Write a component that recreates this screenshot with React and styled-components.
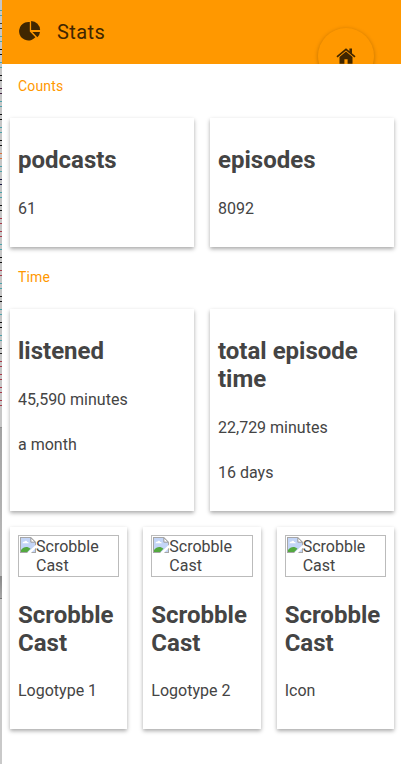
import React from "react";
import styled, { createGlobalStyle } from "styled-components";

const Global = createGlobalStyle`
  html, body { margin: 0; padding: 0; background: #fff; overflow: hidden; }
  body { font-family: Roboto, sans-serif; font-size: 16px; color: #444; }
  * { box-sizing: border-box; }
`;
const Page = styled.div`display: flex; width: 402px; height: 764px;`;
const Edge = styled.div`
  flex: 0 0 2px; height: 764px; padding-top: 10px; overflow: hidden;
  background: linear-gradient(#c6c6c6 0 427px, #8f8f8f 427px 428px, #a2a2a2 428px, #bdbdbd 576px, #888 576px, #a5a5a5 598px, #777 598px 599px, #c9c9c9 599px);
`;
const Mark = styled.div`
  height: 6px; margin: 0 0 7px;
  border: solid ${(p) => p.$color}; border-width: 1px 0;
`;
const Screen = styled.div`flex: 0 0 400px; background: #fff;`;
const Header = styled.header`
  height: 64px; padding: 0 28px 0 16px; display: flex; align-items: center;
  background: #ff9800; color: #402600; overflow: hidden;
`;
const Title = styled.h1`
  margin: 0 auto 0 15px; font-size: 20px; line-height: 28px; font-weight: 400; letter-spacing: 0.4px;
`;
const Fab = styled.button`
  align-self: flex-start; flex: none; width: 56px; height: 56px; margin-top: 28px; padding: 0 0 1px;
  display: flex; align-items: center; justify-content: center;
  border: 0; border-radius: 50%; background: #ff9800; color: #402600;
  box-shadow: 0 1px 4px rgba(0,0,0,.26);
`;
const Subheader = styled.h3`
  margin: 0; height: 46px; padding: 14px 16px 0; font-size: 14px; line-height: 16px; font-weight: 400;
  letter-spacing: 0.15px; color: #ff9800;
`;
const Grid = styled.div`
  display: grid; grid-template-columns: repeat(${(p) => p.$cols}, 1fr); gap: 16px;
  padding: 8px;
`;
const Card = styled.article`
  padding: 8px; min-width: 0; height: ${(p) => p.$height}px; background: #fff;
  box-shadow: 0 1.5px 4px rgba(0,0,0,.34);
`;
const CardTitle = styled.h2`
  margin: 20px 0 ${(p) => (p.$tight ? 24 : 25)}px; font-size: 24px; line-height: 28px; font-weight: 700;
`;
const Line = styled.p`margin: 0 0 26px; line-height: 19px;`;
const Missing = styled.div`
  display: flex; align-items: flex-start; height: 42px; margin-bottom: 24px; padding: 1px 0 1px 1px;
  border: 1px solid #bbb; line-height: 19px;
`;
const BrokenIcon = styled.svg`flex: none; width: 16px; height: 16px;`;

const PieIcon = () => (
  <svg width="24" height="24" viewBox="0 0 24 24" fill="currentColor">
    <path d="M11.8 2v9.4l5.6 5.9A9.3 9.3 0 1 1 11.8 2Z" />
    <path d="M13.1 1a9.1 9.1 0 0 1 9 9.1h-9Z" />
    <path d="M14.4 12h7.6a9 9 0 0 1-2.6 5.3Z" />
  </svg>
);
const HomeIcon = () => (
  <svg width="20" height="18" viewBox="0 0 20 18" fill="none">
    <path d="M1 9.9 10 2.3l9 7.6" stroke="currentColor" strokeWidth="1.7" />
    <path d="M13.4 1.5h2.6v5.6l-2.6-2.2Z" fill="currentColor" />
    <path d="m10 4.6 6.5 5.5v6.6h-4.9v-4.5H8.4v4.5H3.5v-6.6Z" fill="currentColor" />
  </svg>
);
const BrokenImage = () => (
  <BrokenIcon viewBox="0 0 16 16">
    <path d="M0 0h11l5 5v11H0z" fill="#a6a6a6" />
    <path d="M1 1h9.5v4.5H15V15H1z" fill="#c3d5f7" />
    <path d="M2.5 6.3c0-1.5 1.2-1.9 1.8-1.5.5-1.6 2.6-1.5 2.9.1 1-.1 1.6.5 1.6 1.4z" fill="#fff" />
    <path d="M1 15v-2c2.5-3.5 6.5-4 9.5-1.3L7.3 15z" fill="#53a93f" />
    <path d="M11 1l4 4h-4z" fill="#fff" stroke="#999" strokeWidth=".7" />
    <path d="M7 16l9-8.2v3L11 16z" fill="#fff" />
  </BrokenIcon>
);

const teal = "#4ba3ab";
const red = "#a83848";
const dark = "#111";
const marks = [
  teal, "#4a4030", teal, dark, teal, dark, "#402040", teal, dark, teal, dark, "#d9703c", teal,
  "#151540", teal, dark, red, red, teal, dark, red, teal, dark, teal, dark, teal, "#222", red, red, red, red,
];
const counts = [["podcasts", "61"], ["episodes", "8092"]];
const times = [["listened", "45,590 minutes", "a month"], ["total episode time", "22,729 minutes", "16 days"]];
const logos = ["Logotype 1", "Logotype 2", "Icon"];

const Stats = ({ items, height }) => (
  <Grid $cols={2}>
    {items.map(([title, ...lines]) => (
      <Card key={title} $height={height}>
        <CardTitle>{title}</CardTitle>
        {lines.map((l) => <Line key={l}>{l}</Line>)}
      </Card>
    ))}
  </Grid>
);

export default function App() {
  return (
    <Page>
      <Global />
      <Edge>{marks.map((c, i) => <Mark key={i} $color={c} />)}</Edge>
      <Screen>
        <Header>
          <PieIcon />
          <Title>Stats</Title>
          <Fab aria-label="Home"><HomeIcon /></Fab>
        </Header>
        <Subheader>Counts</Subheader>
        <Stats items={counts} height={129} />
        <Subheader>Time</Subheader>
        <Stats items={times} height={202} />
        <Grid $cols={3}>
          {logos.map((name) => (
            <Card key={name} $height={202}>
              <Missing><BrokenImage /><span>Scrobble Cast</span></Missing>
              <CardTitle $tight>Scrobble Cast</CardTitle>
              <Line>{name}</Line>
            </Card>
          ))}
        </Grid>
      </Screen>
    </Page>
  );
}
